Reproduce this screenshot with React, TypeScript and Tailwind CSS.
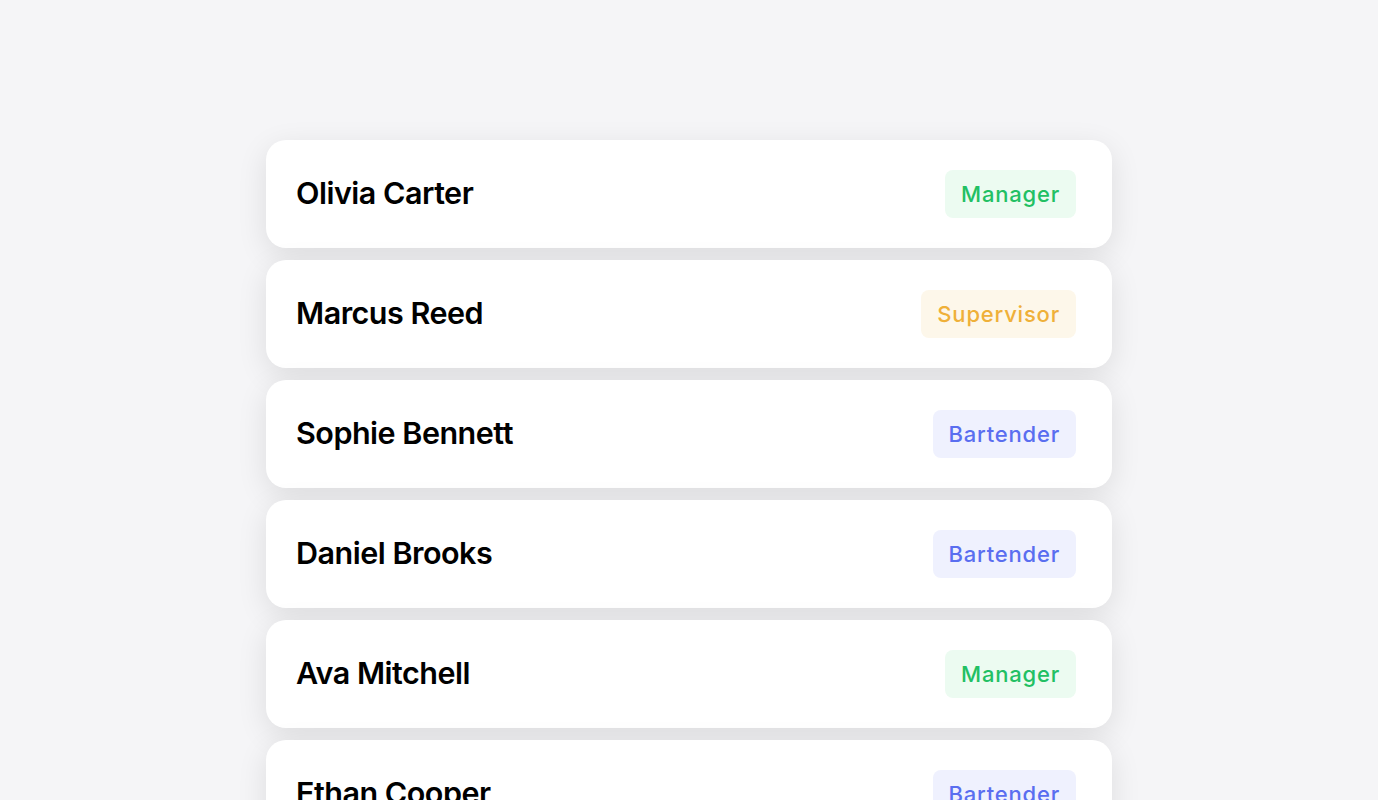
import React from "react";

type Role = "Manager" | "Supervisor" | "Bartender";

const people: { name: string; role: Role }[] = [
  { name: "Olivia Carter", role: "Manager" },
  { name: "Marcus Reed", role: "Supervisor" },
  { name: "Sophie Bennett", role: "Bartender" },
  { name: "Daniel Brooks", role: "Bartender" },
  { name: "Ava Mitchell", role: "Manager" },
  { name: "Ethan Cooper", role: "Bartender" },
];

const badgeClass: Record<Role, string> = {
  Manager: "bg-[#ecfbf1] text-[#22c063]",
  Supervisor: "bg-[#fdf7ea] text-[#efb039]",
  Bartender: "bg-[#eff1fe] text-[#5a6ef0]",
};

export default function App() {
  return (
    <div
      className="h-screen w-full bg-[#f5f5f7] overflow-hidden"
      style={{ fontFamily: "Inter, 'Noto Sans', sans-serif" }}
    >
      <div className="mx-auto w-[846px] pt-[140px] flex flex-col gap-3">
        {people.map((p) => (
          <div
            key={p.name}
            className="h-[108px] shrink-0 bg-white rounded-[20px] flex items-center justify-between pl-[30px] pr-[36px] shadow-[0_8px_30px_rgba(0,0,0,0.10)]"
          >
            <span className="text-[30.5px] leading-none font-semibold text-black tracking-[-0.5px] -translate-y-px">
              {p.name}
            </span>
            <span
              className={`h-12 px-4 flex items-center rounded-lg text-[22px] font-medium tracking-[0.8px] ${badgeClass[p.role]}`}
            >
              {p.role}
            </span>
          </div>
        ))}
      </div>
    </div>
  );
}
